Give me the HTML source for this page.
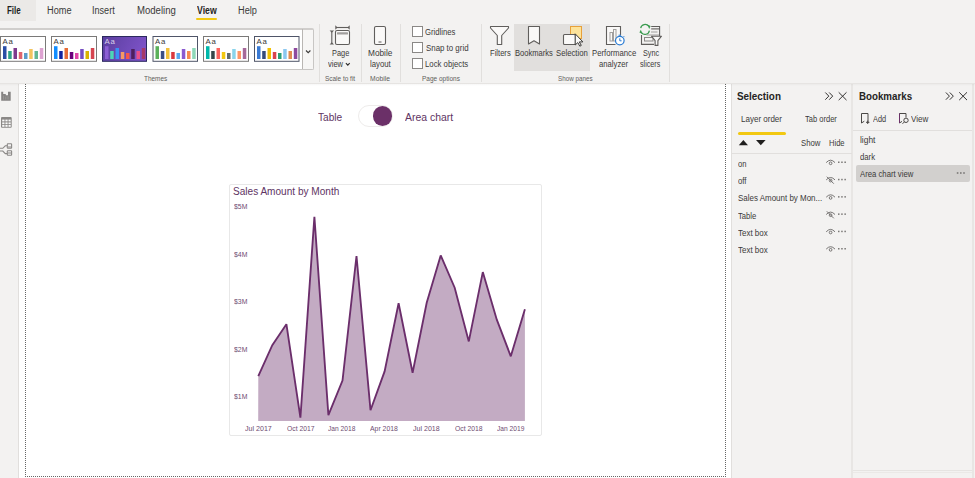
<!DOCTYPE html>
<html><head><meta charset="utf-8">
<style>
*{margin:0;padding:0;box-sizing:border-box}
html,body{width:975px;height:478px;overflow:hidden;background:#fff;font-family:"Liberation Sans",sans-serif;color:#252423}
.a{position:absolute}
.t{position:absolute;white-space:nowrap;line-height:1;transform-origin:0 0}
svg{position:absolute;left:0;top:0}
</style></head><body>
<div class="a" style="left:0;top:0;width:975px;height:83px;background:#f3f2f1"></div>
<div class="a" style="left:0;top:83px;width:975px;height:1px;background:#e6e4e2"></div>
<div class="a" style="left:0;top:84px;width:975px;height:2px;background:linear-gradient(rgba(0,0,0,0.035),rgba(0,0,0,0));z-index:5"></div>
<div class="a" style="left:0;top:0;width:36px;height:21px;background:#ebe9e7"></div>
<div class="a" style="left:196px;top:18px;width:21px;height:2px;background:#f2c811;border-radius:1px"></div>
<div class="a" style="left:-1px;top:28px;width:315px;height:42px;background:#fff;border:1px solid #c8c6c4;border-top:2px solid #d0cecc;border-radius:0 2px 2px 0"></div>
<div class="a" style="left:302px;top:29px;width:1px;height:40px;background:#b9b6b3"></div>
<div class="a" style="left:303px;top:29.5px;width:10px;height:39.5px;background:#f7f6f5"></div>
<div class="a" style="left:319px;top:24px;width:1px;height:58px;background:#e1dfdd"></div>
<div class="a" style="left:361px;top:24px;width:1px;height:58px;background:#e1dfdd"></div>
<div class="a" style="left:400px;top:24px;width:1px;height:58px;background:#e1dfdd"></div>
<div class="a" style="left:412px;top:26px;width:11px;height:11px;background:#fff;border:1px solid #8a8886"></div>
<div class="a" style="left:412px;top:42px;width:11px;height:11px;background:#fff;border:1px solid #8a8886"></div>
<div class="a" style="left:412px;top:58px;width:11px;height:11px;background:#fff;border:1px solid #8a8886"></div>
<div class="a" style="left:481px;top:24px;width:1px;height:58px;background:#e1dfdd"></div>
<div class="a" style="left:514px;top:24px;width:76px;height:47px;background:#e1dfdd"></div>
<div class="a" style="left:669px;top:24px;width:1px;height:58px;background:#e1dfdd"></div>
<div class="a" style="left:0;top:84px;width:19px;height:394px;background:#f3f2f1;border-right:1px solid #e1dfdd"></div>
<div class="a" style="left:25px;top:84px;width:701px;height:393px;border-left:1px dotted #666;border-right:1px dotted #666;border-bottom:1px dotted #666"></div>
<div class="a" style="left:358px;top:105px;width:34.5px;height:22px;border:1px solid #eeeceb;border-radius:11px;background:#fff"></div>
<div class="a" style="left:372.6px;top:106px;width:19.8px;height:19.8px;border-radius:50%;background:#6b3068"></div>
<div class="a" style="left:229px;top:184px;width:313px;height:252px;border:1px solid #e8e8e8;border-radius:2px"></div>
<div class="a" style="left:731px;top:84px;width:244px;height:394px;background:#f3f2f1"></div>
<div class="a" style="left:731px;top:84px;width:1px;height:394px;background:#e1dfdd"></div>
<div class="a" style="left:851px;top:84px;width:2px;height:394px;background:#e8e6e4"></div>
<div class="a" style="left:971.5px;top:84px;width:2px;height:394px;background:#e8e6e4"></div>
<div class="a" style="left:853px;top:469.5px;width:119px;height:1.5px;background:#e6e4e2"></div>
<div class="a" style="left:853px;top:472px;width:119px;height:1px;background:#ebe9e7"></div>
<div class="a" style="left:738px;top:131.5px;width:48px;height:3px;background:#f2c811;border-radius:2px"></div>
<div class="a" style="left:732px;top:153px;width:120px;height:1px;background:#e1dfdd"></div>
<div class="a" style="left:853px;top:130px;width:119px;height:1px;background:#e1dfdd"></div>
<div class="a" style="left:856px;top:165px;width:114px;height:17px;background:#d2d0ce;border-radius:2px"></div>
<svg width="975" height="478">
<defs><linearGradient id="tg" x1="0" y1="0" x2="1" y2="0.3"><stop offset="0" stop-color="#5a3e9e"/><stop offset="1" stop-color="#7c52c6"/></linearGradient></defs>
<rect x="0.5" y="36.5" width="45" height="24.8" fill="#ffffff" stroke="#7a7978" stroke-width="1"/>
<text x="2.5" y="44.4" font-family="Liberation Sans" font-size="7.8" fill="#3b3a39" letter-spacing="0.7">Aa</text>
<rect x="3.0" y="46.2" width="3.5" height="12.8" fill="#2a4ea6"/>
<rect x="8.2" y="51" width="3.5" height="8.0" fill="#2ea386"/>
<rect x="13.5" y="48" width="3.5" height="11.0" fill="#7d3a8c"/>
<rect x="18.8" y="52" width="3.5" height="7.0" fill="#e0646c"/>
<rect x="24.0" y="53" width="3.5" height="6.0" fill="#5b9bc8"/>
<rect x="29.2" y="49" width="3.5" height="10.0" fill="#f2c45f"/>
<rect x="34.5" y="51" width="3.5" height="8.0" fill="#63b794"/>
<rect x="39.8" y="48" width="3.5" height="11.0" fill="#dda2d1"/>
<rect x="51.5" y="36.5" width="45" height="24.8" fill="#ffffff" stroke="#7a7978" stroke-width="1"/>
<text x="53.5" y="44.4" font-family="Liberation Sans" font-size="7.8" fill="#3b3a39" letter-spacing="0.7">Aa</text>
<rect x="54.0" y="46.2" width="3.5" height="12.8" fill="#118dff"/>
<rect x="59.2" y="51" width="3.5" height="8.0" fill="#12239e"/>
<rect x="64.5" y="48" width="3.5" height="11.0" fill="#e66c37"/>
<rect x="69.8" y="52" width="3.5" height="7.0" fill="#6b007b"/>
<rect x="75.0" y="53" width="3.5" height="6.0" fill="#e044a7"/>
<rect x="80.2" y="49" width="3.5" height="10.0" fill="#744ec2"/>
<rect x="85.5" y="51" width="3.5" height="8.0" fill="#d9b300"/>
<rect x="90.8" y="48" width="3.5" height="11.0" fill="#d64550"/>
<rect x="102.5" y="36.5" width="44" height="24.8" fill="url(#tg)" stroke="#2b2a5e" stroke-width="1"/>
<text x="104.5" y="44.4" font-family="Liberation Sans" font-size="7.8" fill="#d9d0ea" letter-spacing="0.7">Aa</text>
<rect x="105.0" y="46.2" width="3.5" height="12.8" fill="#8c5fd4"/>
<rect x="110.2" y="51" width="3.5" height="8.0" fill="#4bd6b6"/>
<rect x="115.5" y="48" width="3.5" height="11.0" fill="#3a8ff5"/>
<rect x="120.8" y="52" width="3.5" height="7.0" fill="#f79a64"/>
<rect x="126.0" y="53" width="3.5" height="6.0" fill="#f5574c"/>
<rect x="131.2" y="49" width="3.5" height="10.0" fill="#4d1e5e"/>
<rect x="136.5" y="51" width="3.5" height="8.0" fill="#e94f8a"/>
<rect x="141.8" y="48" width="3.5" height="11.0" fill="#a53a6a"/>
<rect x="153.0" y="36.5" width="44.5" height="24.8" fill="#ffffff" stroke="#4f5568" stroke-width="1"/>
<text x="155.0" y="44.4" font-family="Liberation Sans" font-size="7.8" fill="#3b3a39" letter-spacing="0.7">Aa</text>
<rect x="155.5" y="46.2" width="3.5" height="12.8" fill="#5bb05b"/>
<rect x="160.8" y="51" width="3.5" height="8.0" fill="#3a4e85"/>
<rect x="166.0" y="48" width="3.5" height="11.0" fill="#f2c13a"/>
<rect x="171.2" y="52" width="3.5" height="7.0" fill="#d9393f"/>
<rect x="176.5" y="53" width="3.5" height="6.0" fill="#5aaaf0"/>
<rect x="181.8" y="49" width="3.5" height="10.0" fill="#8a5ad0"/>
<rect x="187.0" y="51" width="3.5" height="8.0" fill="#f78a50"/>
<rect x="192.2" y="48" width="3.5" height="11.0" fill="#8ed8b8"/>
<rect x="203.5" y="36.5" width="45" height="24.8" fill="#ffffff" stroke="#7a7978" stroke-width="1"/>
<text x="205.5" y="44.4" font-family="Liberation Sans" font-size="7.8" fill="#3b3a39" letter-spacing="0.7">Aa</text>
<rect x="206.0" y="46.2" width="3.5" height="12.8" fill="#01b8aa"/>
<rect x="211.2" y="51" width="3.5" height="8.0" fill="#374649"/>
<rect x="216.5" y="48" width="3.5" height="11.0" fill="#fd625e"/>
<rect x="221.8" y="52" width="3.5" height="7.0" fill="#f2c80f"/>
<rect x="227.0" y="53" width="3.5" height="6.0" fill="#5f6b6d"/>
<rect x="232.2" y="49" width="3.5" height="10.0" fill="#8ad4eb"/>
<rect x="237.5" y="51" width="3.5" height="8.0" fill="#fe9666"/>
<rect x="242.8" y="48" width="3.5" height="11.0" fill="#a66999"/>
<rect x="254.5" y="36.5" width="44.5" height="24.8" fill="#ffffff" stroke="#4f5568" stroke-width="1"/>
<text x="256.5" y="44.4" font-family="Liberation Sans" font-size="7.8" fill="#3b3a39" letter-spacing="0.7">Aa</text>
<rect x="257.0" y="46.2" width="3.5" height="12.8" fill="#3a7bd5"/>
<rect x="262.2" y="51" width="3.5" height="8.0" fill="#354a7a"/>
<rect x="267.5" y="48" width="3.5" height="11.0" fill="#f2c000"/>
<rect x="272.8" y="52" width="3.5" height="7.0" fill="#d9434e"/>
<rect x="278.0" y="53" width="3.5" height="6.0" fill="#2a9e76"/>
<rect x="283.2" y="49" width="3.5" height="10.0" fill="#8cc8f0"/>
<rect x="288.5" y="51" width="3.5" height="8.0" fill="#e28b50"/>
<rect x="293.8" y="48" width="3.5" height="11.0" fill="#8e4a9e"/>
<polygon points="258.2,421 258.3,376.2 272.3,345.2 286.4,324.2 300.4,417.7 314.4,216.7 328.4,415.2 342.5,380.6 356.5,256.0 370.5,410.2 384.6,371.4 398.6,303.2 412.6,372.7 426.7,302.7 440.7,255.4 454.7,287.7 468.8,341.4 482.8,272.1 496.8,319.7 510.8,356.3 524.9,309.2 524.9,421" fill="#c3abc3"/><polyline points="258.3,376.2 272.3,345.2 286.4,324.2 300.4,417.7 314.4,216.7 328.4,415.2 342.5,380.6 356.5,256.0 370.5,410.2 384.6,371.4 398.6,303.2 412.6,372.7 426.7,302.7 440.7,255.4 454.7,287.7 468.8,341.4 482.8,272.1 496.8,319.7 510.8,356.3 524.9,309.2" fill="none" stroke="#6b2e6b" stroke-width="1.85" stroke-linejoin="miter" stroke-miterlimit="2"/>
<!-- gallery dropdown chevron -->
<path d="M306 50.5l2.2 2.2 2.2-2.2" fill="none" stroke="#3b3a39" stroke-width="1.1"/>
<!-- view chevron -->
<path d="M345.9 63.2l1.9 1.9 1.9-1.9" fill="none" stroke="#323130" stroke-width="1.2"/>
<!-- Page view icon -->
<g fill="none" stroke="#605e5c" stroke-width="1.1">
<rect x="335.5" y="30.5" width="14" height="14" rx="1.5" fill="#faf9f8"/>
<path d="M336 27.5h13"/>
<path d="M331.8 31v13"/>
</g>
<path d="M335.3 25.3v4.4l2.2-2.2zM349.7 25.3v4.4l-2.2-2.2zM329.6 30.5h4.4l-2.2 2.2zM329.6 44.5h4.4l-2.2-2.2z" fill="#605e5c"/>
<rect x="337" y="32.2" width="11" height="2.4" rx="0.5" fill="#a19f9d"/>
<!-- Mobile icon -->
<rect x="374.5" y="26.5" width="11" height="18" rx="1.5" fill="#faf9f8" stroke="#605e5c" stroke-width="1.1"/>
<rect x="378.5" y="41.5" width="3" height="1" fill="#605e5c"/>
<!-- Filters icon -->
<path d="M490.5 26.5h18v1.5l-6.8 7.5v9h-4.4v-9l-6.8-7.5z" fill="#faf9f8" stroke="#605e5c" stroke-width="1.1" stroke-linejoin="round"/>
<!-- Bookmarks icon -->
<path d="M528.5 26.5h11v17.5l-5.5-3.3-5.5 3.3z" fill="#faf9f8" stroke="#605e5c" stroke-width="1.1" stroke-linejoin="round"/>
<!-- Selection icon -->
<rect x="570.5" y="26.5" width="11" height="12" fill="#fde39a" stroke="#e8a13a" stroke-width="1"/>
<rect x="563.5" y="34.5" width="12" height="10" rx="1" fill="#faf9f8" stroke="#605e5c" stroke-width="1.1"/>
<path d="M575.2 33.8v11.2l2.6-2.4 2 3.6 1.5-0.8-2-3.5h3.6z" fill="#faf9f8" stroke="#3b3a39" stroke-width="1" stroke-linejoin="round"/>
<!-- Performance analyzer icon -->
<path d="M615.5 44.5h-9v-18h14v9" fill="#faf9f8" stroke="#605e5c" stroke-width="1.1"/>
<rect x="610" y="32.5" width="2.5" height="8.5" fill="none" stroke="#a19f9d" stroke-width="1"/>
<rect x="613.5" y="29.5" width="2.5" height="11.5" fill="none" stroke="#a19f9d" stroke-width="1"/>
<circle cx="619.8" cy="40.6" r="4.3" fill="#fff" stroke="#2b7cd3" stroke-width="1.2"/>
<path d="M619.8 38.3v2.5h1.8" fill="none" stroke="#2b7cd3" stroke-width="1"/>
<path d="M618.6 35.2h2.4M623.6 36.2l0.9 0.9" fill="none" stroke="#2b7cd3" stroke-width="1"/>
<!-- Sync slicers icon -->
<g fill="none" stroke="#605e5c" stroke-width="1.1">
<path d="M651.2 26.5h8.4v9.5M641.5 35v9.4h12.5"/>
<path d="M651.2 28.9h8"/>
</g>
<path d="M651 32h6.5M646.5 35h12.5" fill="none" stroke="#a19f9d" stroke-width="1"/>
<rect x="644.5" y="37.5" width="8.5" height="3.5" fill="none" stroke="#8a8886" stroke-width="1"/>
<path d="M651.5 36.2h10l-3.6 4.4v4.8h-2.8v-4.8z" fill="#faf9f8" stroke="#605e5c" stroke-width="1.1" stroke-linejoin="round"/>
<g fill="none" stroke="#3a9b4f" stroke-width="1.2">
<path d="M640.7 28.2a4.5 4.5 0 0 1 8-2"/>
<path d="M649.4 30.6a4.5 4.5 0 0 1 -8 2"/>
</g>
<path d="M647.3 24.6l3.3 1.5-1.4 2.9z M642.7 34.1l-3.3-1.5 1.4-2.9z" fill="#3a9b4f"/>
<!-- left rail icons -->
<path d="M1.2 91.8h2v2.2h2.6v1.2h2.2v-3.4h2.7v8.9h-9.5z" fill="#858382"/>
<path d="M3.6 99.6v-4M5.8 99.6v-3M8 99.6v-3.5" stroke="#a9a7a5" stroke-width="0.6" fill="none"/>
<rect x="1" y="117" width="10.7" height="10.8" rx="1" fill="#8a8886"/>
<g fill="#fafafa">
<rect x="2.2" y="119.6" width="2.3" height="1.8"/><rect x="5.4" y="119.6" width="2.2" height="1.8"/><rect x="8.5" y="119.6" width="2.2" height="1.8"/>
<rect x="2.2" y="122.4" width="2.3" height="1.8"/><rect x="5.4" y="122.4" width="2.2" height="1.8"/><rect x="8.5" y="122.4" width="2.2" height="1.8"/>
<rect x="2.2" y="125" width="2.3" height="1.8"/><rect x="5.4" y="125" width="2.2" height="1.8"/><rect x="8.5" y="125" width="2.2" height="1.8"/>
</g>
<g fill="none" stroke="#8a8886" stroke-width="1.1">
<rect x="7.3" y="143.7" width="4.3" height="4.6" rx="0.6"/>
<rect x="7.3" y="150.7" width="4.3" height="4.6" rx="0.6"/>
<path d="M0 148.3h2.8l2.5-2.5h2M0 151h2.8l2.5 2.6h2"/>
</g>
<path d="M8 147h3M8 153h3" stroke="#8a8886" stroke-width="1" fill="none"/>
<!-- Selection pane header icons -->
<g fill="none" stroke="#323130" stroke-width="1">
<path d="M825.3 92.5l3.5 3.6-3.5 3.6M829.2 92.5l3.5 3.6-3.5 3.6"/>
<path d="M838.7 92.3l7.8 7.8M846.5 92.3l-7.8 7.8"/>
<path d="M945.9 92.5l3.5 3.6-3.5 3.6M949.8 92.5l3.5 3.6-3.5 3.6"/>
<path d="M959.2 92.3l7.8 7.8M967 92.3l-7.8 7.8"/>
</g>
<path d="M738.8 145.2l4.6-5.2 4.6 5.2z" fill="#201f1e"/>
<path d="M756 140h9.6l-4.8 5.2z" fill="#201f1e"/>
<!-- eye icons -->
<g fill="none" stroke="#6f6d6b" stroke-width="0.95">
<path d="M826.2 162.6q4.4-4.8 8.8 0"/><circle cx="830.6" cy="163.3" r="1.35"/>
<path d="M826.2 179.9q4.4-4.8 8.8 0"/><circle cx="830.6" cy="180.6" r="1.35"/>
<path d="M826.8 176.7l7 7"/>
<path d="M826.2 197.2q4.4-4.8 8.8 0"/><circle cx="830.6" cy="197.9" r="1.35"/>
<path d="M826.2 214.5q4.4-4.8 8.8 0"/><circle cx="830.6" cy="215.2" r="1.35"/>
<path d="M826.8 211.3l7 7"/>
<path d="M826.2 231.8q4.4-4.8 8.8 0"/><circle cx="830.6" cy="232.5" r="1.35"/>
<path d="M826.2 249.1q4.4-4.8 8.8 0"/><circle cx="830.6" cy="249.8" r="1.35"/>
</g><g fill="#7a7876">
<rect x="838" y="161.5" width="1.5" height="1.5"/><rect x="841.2" y="161.5" width="1.5" height="1.5"/><rect x="844.4" y="161.5" width="1.5" height="1.5"/>
<rect x="838" y="178.8" width="1.5" height="1.5"/><rect x="841.2" y="178.8" width="1.5" height="1.5"/><rect x="844.4" y="178.8" width="1.5" height="1.5"/>
<rect x="838" y="196.1" width="1.5" height="1.5"/><rect x="841.2" y="196.1" width="1.5" height="1.5"/><rect x="844.4" y="196.1" width="1.5" height="1.5"/>
<rect x="838" y="213.4" width="1.5" height="1.5"/><rect x="841.2" y="213.4" width="1.5" height="1.5"/><rect x="844.4" y="213.4" width="1.5" height="1.5"/>
<rect x="838" y="230.7" width="1.5" height="1.5"/><rect x="841.2" y="230.7" width="1.5" height="1.5"/><rect x="844.4" y="230.7" width="1.5" height="1.5"/>
<rect x="838" y="248.0" width="1.5" height="1.5"/><rect x="841.2" y="248.0" width="1.5" height="1.5"/><rect x="844.4" y="248.0" width="1.5" height="1.5"/>
<rect x="956.8" y="172.2" width="1.6" height="1.6"/><rect x="960" y="172.2" width="1.6" height="1.6"/><rect x="963.2" y="172.2" width="1.6" height="1.6"/>
</g>
<!-- Bookmarks Add / View icons -->
<g fill="none" stroke="#4a4846" stroke-width="1">
<path d="M861.5 113.5h6.5v9.5M861.5 113.5v9.5l2.8-1.8"/>
<path d="M866 122.3h3.4M867.7 120.6v3.4"/>
</g>
<g fill="none" stroke="#4a4846" stroke-width="1">
<path d="M899.5 113.5h6.5v4M899.5 113.5v9.5l2.5-1.6"/>
<circle cx="906" cy="120.3" r="2.2"/><path d="M904.4 121.9l-1.9 1.9"/>
</g>
<path d="M899.5 113.5v9.5" stroke="#6b3068" stroke-width="1" fill="none"/>

</svg>
<div class="t" id="t0" style="left:7.29px;top:5.81px;font-size:10px;font-weight:bold;color:#201f1e;transform:scaleX(0.7974);">File</div>
<div class="t" id="t1" style="left:46.53px;top:5.81px;font-size:10px;color:#3b3a39;transform:scaleX(0.9190);">Home</div>
<div class="t" id="t2" style="left:92.07px;top:5.81px;font-size:10px;color:#3b3a39;transform:scaleX(0.9087);">Insert</div>
<div class="t" id="t3" style="left:137.00px;top:5.81px;font-size:10px;color:#3b3a39;transform:scaleX(0.9573);">Modeling</div>
<div class="t" id="t4" style="left:196.76px;top:5.81px;font-size:10px;font-weight:bold;color:#252423;transform:scaleX(0.8700);">View</div>
<div class="t" id="t5" style="left:238.00px;top:5.81px;font-size:10px;color:#3b3a39;transform:scaleX(0.9191);">Help</div>
<div class="t" id="t6" style="left:331.92px;top:49.01px;font-size:9px;color:#3b3a39;transform:scaleX(0.8223);">Page</div>
<div class="t" id="t7" style="left:328.00px;top:59.60px;font-size:9px;color:#3b3a39;transform:scaleX(0.8357);">view</div>
<div class="t" id="t8" style="left:368.00px;top:49.01px;font-size:9px;color:#3b3a39;transform:scaleX(0.9203);">Mobile</div>
<div class="t" id="t9" style="left:369.62px;top:59.60px;font-size:9px;color:#3b3a39;transform:scaleX(0.8624);">layout</div>
<div class="t" id="t10" style="left:425.42px;top:27.60px;font-size:9px;color:#3b3a39;transform:scaleX(0.8570);">Gridlines</div>
<div class="t" id="t11" style="left:425.60px;top:43.60px;font-size:9px;color:#3b3a39;transform:scaleX(0.8760);">Snap to grid</div>
<div class="t" id="t12" style="left:425.47px;top:59.60px;font-size:9px;color:#3b3a39;transform:scaleX(0.8637);">Lock objects</div>
<div class="t" id="t13" style="left:490.00px;top:49.01px;font-size:9px;color:#3b3a39;transform:scaleX(0.8440);">Filters</div>
<div class="t" id="t14" style="left:515.00px;top:49.01px;font-size:9px;color:#3b3a39;transform:scaleX(0.8410);">Bookmarks</div>
<div class="t" id="t15" style="left:556.22px;top:49.01px;font-size:9px;color:#3b3a39;transform:scaleX(0.8605);">Selection</div>
<div class="t" id="t16" style="left:591.63px;top:49.01px;font-size:9px;color:#3b3a39;transform:scaleX(0.8596);">Performance</div>
<div class="t" id="t17" style="left:599.00px;top:59.51px;font-size:9px;color:#3b3a39;transform:scaleX(0.8549);">analyzer</div>
<div class="t" id="t18" style="left:642.51px;top:49.01px;font-size:9px;color:#3b3a39;transform:scaleX(0.8059);">Sync</div>
<div class="t" id="t19" style="left:640.05px;top:59.51px;font-size:9px;color:#3b3a39;transform:scaleX(0.7941);">slicers</div>
<div class="t" id="t20" style="left:144.31px;top:75.11px;font-size:7px;color:#605e5c;transform:scaleX(0.9200);">Themes</div>
<div class="t" id="t21" style="left:324.60px;top:75.11px;font-size:7px;color:#605e5c;transform:scaleX(0.9218);">Scale to fit</div>
<div class="t" id="t22" style="left:370.48px;top:75.11px;font-size:7px;color:#605e5c;transform:scaleX(0.9647);">Mobile</div>
<div class="t" id="t23" style="left:421.77px;top:75.11px;font-size:7px;color:#605e5c;transform:scaleX(0.9268);">Page options</div>
<div class="t" id="t24" style="left:558.00px;top:75.11px;font-size:7px;color:#605e5c;transform:scaleX(0.8974);">Show panes</div>
<div class="t" id="t25" style="left:317.69px;top:112.50px;font-size:10px;color:#603463;transform:scaleX(1.0104);">Table</div>
<div class="t" id="t26" style="left:405.00px;top:112.61px;font-size:10px;color:#603463;transform:scaleX(1.0439);">Area chart</div>
<div class="t" id="t27" style="left:233.28px;top:187.20px;font-size:10px;color:#603463;transform:scaleX(1.0062);">Sales Amount by Month</div>
<div class="t" id="t28" style="left:233.95px;top:203.00px;font-size:7.5px;color:#6e4c71;transform:scaleX(0.9163);">$5M</div>
<div class="t" id="t29" style="left:233.95px;top:250.61px;font-size:7.5px;color:#6e4c71;transform:scaleX(0.9163);">$4M</div>
<div class="t" id="t30" style="left:233.95px;top:298.22px;font-size:7.5px;color:#6e4c71;transform:scaleX(0.9163);">$3M</div>
<div class="t" id="t31" style="left:233.95px;top:345.81px;font-size:7.5px;color:#6e4c71;transform:scaleX(0.9163);">$2M</div>
<div class="t" id="t32" style="left:233.95px;top:393.41px;font-size:7.5px;color:#6e4c71;transform:scaleX(0.9163);">$1M</div>
<div class="t" id="t33" style="left:245.00px;top:424.50px;font-size:7.5px;color:#6e4c71;transform:scaleX(0.9440);">Jul 2017</div>
<div class="t" id="t34" style="left:287.28px;top:424.50px;font-size:7.5px;color:#6e4c71;transform:scaleX(0.9004);">Oct 2017</div>
<div class="t" id="t35" style="left:328.05px;top:424.50px;font-size:7.5px;color:#6e4c71;transform:scaleX(0.8859);">Jan 2018</div>
<div class="t" id="t36" style="left:370.41px;top:424.50px;font-size:7.5px;color:#6e4c71;transform:scaleX(0.9136);">Apr 2018</div>
<div class="t" id="t37" style="left:413.34px;top:424.50px;font-size:7.5px;color:#6e4c71;transform:scaleX(0.9394);">Jul 2018</div>
<div class="t" id="t38" style="left:455.00px;top:424.50px;font-size:7.5px;color:#6e4c71;transform:scaleX(0.9067);">Oct 2018</div>
<div class="t" id="t39" style="left:496.73px;top:424.50px;font-size:7.5px;color:#6e4c71;transform:scaleX(0.8859);">Jan 2019</div>
<div class="t" id="t40" style="left:737.08px;top:91.21px;font-size:10.5px;font-weight:bold;color:#252423;transform:scaleX(0.9410);">Selection</div>
<div class="t" id="t41" style="left:741.43px;top:114.81px;font-size:9px;color:#3b3a39;transform:scaleX(0.8904);">Layer order</div>
<div class="t" id="t42" style="left:805.41px;top:114.81px;font-size:9px;color:#3b3a39;transform:scaleX(0.8373);">Tab order</div>
<div class="t" id="t43" style="left:800.73px;top:139.01px;font-size:9px;color:#3b3a39;transform:scaleX(0.8636);">Show</div>
<div class="t" id="t44" style="left:829.32px;top:139.01px;font-size:9px;color:#3b3a39;transform:scaleX(0.8421);">Hide</div>
<div class="t" id="t45" style="left:737.64px;top:159.51px;font-size:9px;color:#3b3a39;transform:scaleX(0.8467);">on</div>
<div class="t" id="t46" style="left:737.60px;top:176.60px;font-size:9px;color:#3b3a39;transform:scaleX(0.8589);">off</div>
<div class="t" id="t47" style="left:737.93px;top:194.20px;font-size:9px;color:#3b3a39;transform:scaleX(0.8853);">Sales Amount by Mon...</div>
<div class="t" id="t48" style="left:737.98px;top:211.51px;font-size:9px;color:#3b3a39;transform:scaleX(0.8521);">Table</div>
<div class="t" id="t49" style="left:737.92px;top:228.81px;font-size:9px;color:#3b3a39;transform:scaleX(0.8865);">Text box</div>
<div class="t" id="t50" style="left:737.92px;top:246.01px;font-size:9px;color:#3b3a39;transform:scaleX(0.8865);">Text box</div>
<div class="t" id="t51" style="left:858.77px;top:90.91px;font-size:10.5px;font-weight:bold;color:#252423;transform:scaleX(0.9281);">Bookmarks</div>
<div class="t" id="t52" style="left:872.65px;top:114.81px;font-size:9px;color:#3b3a39;transform:scaleX(0.8167);">Add</div>
<div class="t" id="t53" style="left:910.78px;top:114.81px;font-size:9px;color:#3b3a39;transform:scaleX(0.8943);">View</div>
<div class="t" id="t54" style="left:859.67px;top:135.70px;font-size:9px;color:#3b3a39;transform:scaleX(0.9340);">light</div>
<div class="t" id="t55" style="left:859.60px;top:152.70px;font-size:9px;color:#3b3a39;transform:scaleX(0.8589);">dark</div>
<div class="t" id="t56" style="left:859.65px;top:170.01px;font-size:9px;color:#3b3a39;transform:scaleX(0.8586);">Area chart view</div>
</body></html>
